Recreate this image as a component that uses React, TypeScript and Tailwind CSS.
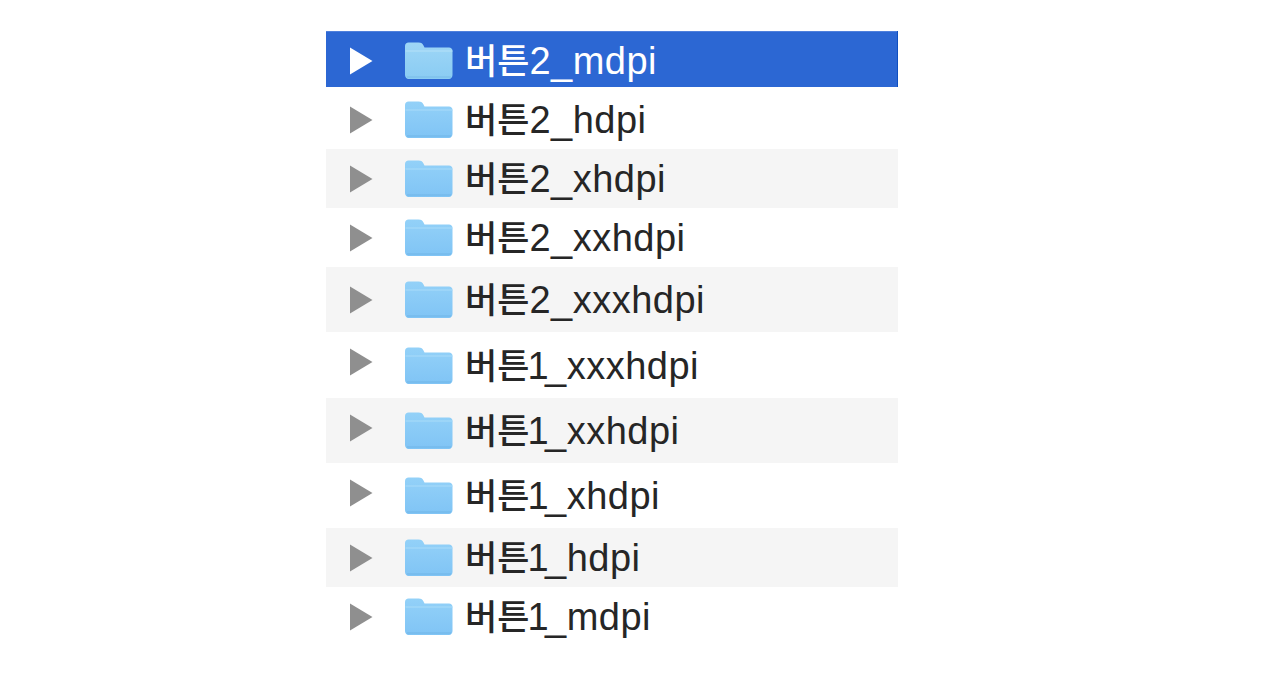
const rows = [
  { d: "2", en: "_mdpi", h: "h-[56px] pt-[3px]", tone: "sel", arrow: "" },
  { d: "2", en: "_hdpi", h: "h-[62px] pt-[3px]", tone: "", arrow: "" },
  { d: "2", en: "_xhdpi", h: "h-[59px]", tone: "alt", arrow: "" },
  { d: "2", en: "_xxhdpi", h: "h-[59px]", tone: "", arrow: "" },
  { d: "2", en: "_xxxhdpi", h: "h-[65px]", tone: "alt", arrow: "" },
  { d: "1", en: "_xxxhdpi", h: "h-[66px] pt-[1px]", tone: "", arrow: "mb-[7px]" },
  { d: "1", en: "_xxhdpi", h: "h-[65px]", tone: "alt", arrow: "mb-[5px]" },
  { d: "1", en: "_xhdpi", h: "h-[65px]", tone: "", arrow: "mb-[5px]" },
  { d: "1", en: "_hdpi", h: "h-[59px]", tone: "alt", arrow: "" },
  { d: "1", en: "_mdpi", h: "h-[59px]", tone: "", arrow: "" },
];

function Folder({ sel }: { sel: boolean }) {
  const id = sel ? "gs" : "gn";
  return (
    <svg width="48" height="38" viewBox="0 0 48 38" className="shrink-0">
      <defs>
        <linearGradient id={id} x1="0" y1="0" x2="0" y2="1">
          <stop offset="0" stopColor={sel ? "#9ed6f6" : "#93d1f8"} />
          <stop offset="1" stopColor={sel ? "#8accf3" : "#80c4f5"} />
        </linearGradient>
      </defs>
      <path
        d="M3.500 0.500h10c3 0 4 1 5 3l1 2h24.500c2 0 3.500 1.300 3.500 3.500v24c0 2.300-1.500 4-3.500 4h-40.500c-2 0-3.500-1.700-3.500-4V4c0-2.200 1.500-3.500 3.500-3.500z"
        fill={`url(#${id})`}
      />
      <path d="M0.500 9h47" stroke={sel ? "#b5e1f8" : "#a9dcf9"} strokeWidth="1" />
      <path d="M2 35h44" stroke={sel ? "#78bce8" : "#70b6e8"} strokeWidth="1.200" />
    </svg>
  );
}

function Arrow({ sel, cls }: { sel: boolean; cls: string }) {
  return (
    <svg width="24" height="28" viewBox="0 0 24 28" className={`shrink-0 ${cls}`}>
      <path d="M1 0.500L23.500 14L1 27.500z" fill={sel ? "#ffffff" : "#8f8f8f"} />
    </svg>
  );
}

export default function App() {
  return (
    <div className="min-h-[673px] bg-white pt-[31px] pl-[326px] font-['Liberation_Sans','Noto_Sans_CJK_KR',sans-serif]">
      <div className="flex w-[572px] flex-col">
        {rows.map((r) => {
          const sel = r.tone === "sel";
          return (
            <div
              key={r.d + r.en}
              className={`flex items-center pl-[23px] ${r.h} ${
                sel
                  ? "border-r border-[#0f4fc0] bg-[#2c67d3] text-white shadow-[inset_0_1px_0_#4f80dc]"
                  : r.tone === "alt"
                    ? "bg-[#f5f5f5] text-[#262626]"
                    : "bg-white text-[#262626]"
              }`}
            >
              <Arrow sel={sel} cls={r.arrow} />
              <div className="ml-[32px] flex">
                <Folder sel={sel} />
              </div>
              <span className="ml-[12px] text-[35px] leading-none font-medium whitespace-nowrap">
                버튼
                <span className="text-[38px] font-normal tracking-[0.5px]">
                  <span className={r.d === "1" ? "ml-[-2px] tracking-[-3.500px]" : ""}>{r.d}</span>
                  {r.en}
                </span>
              </span>
            </div>
          );
        })}
      </div>
    </div>
  );
}
